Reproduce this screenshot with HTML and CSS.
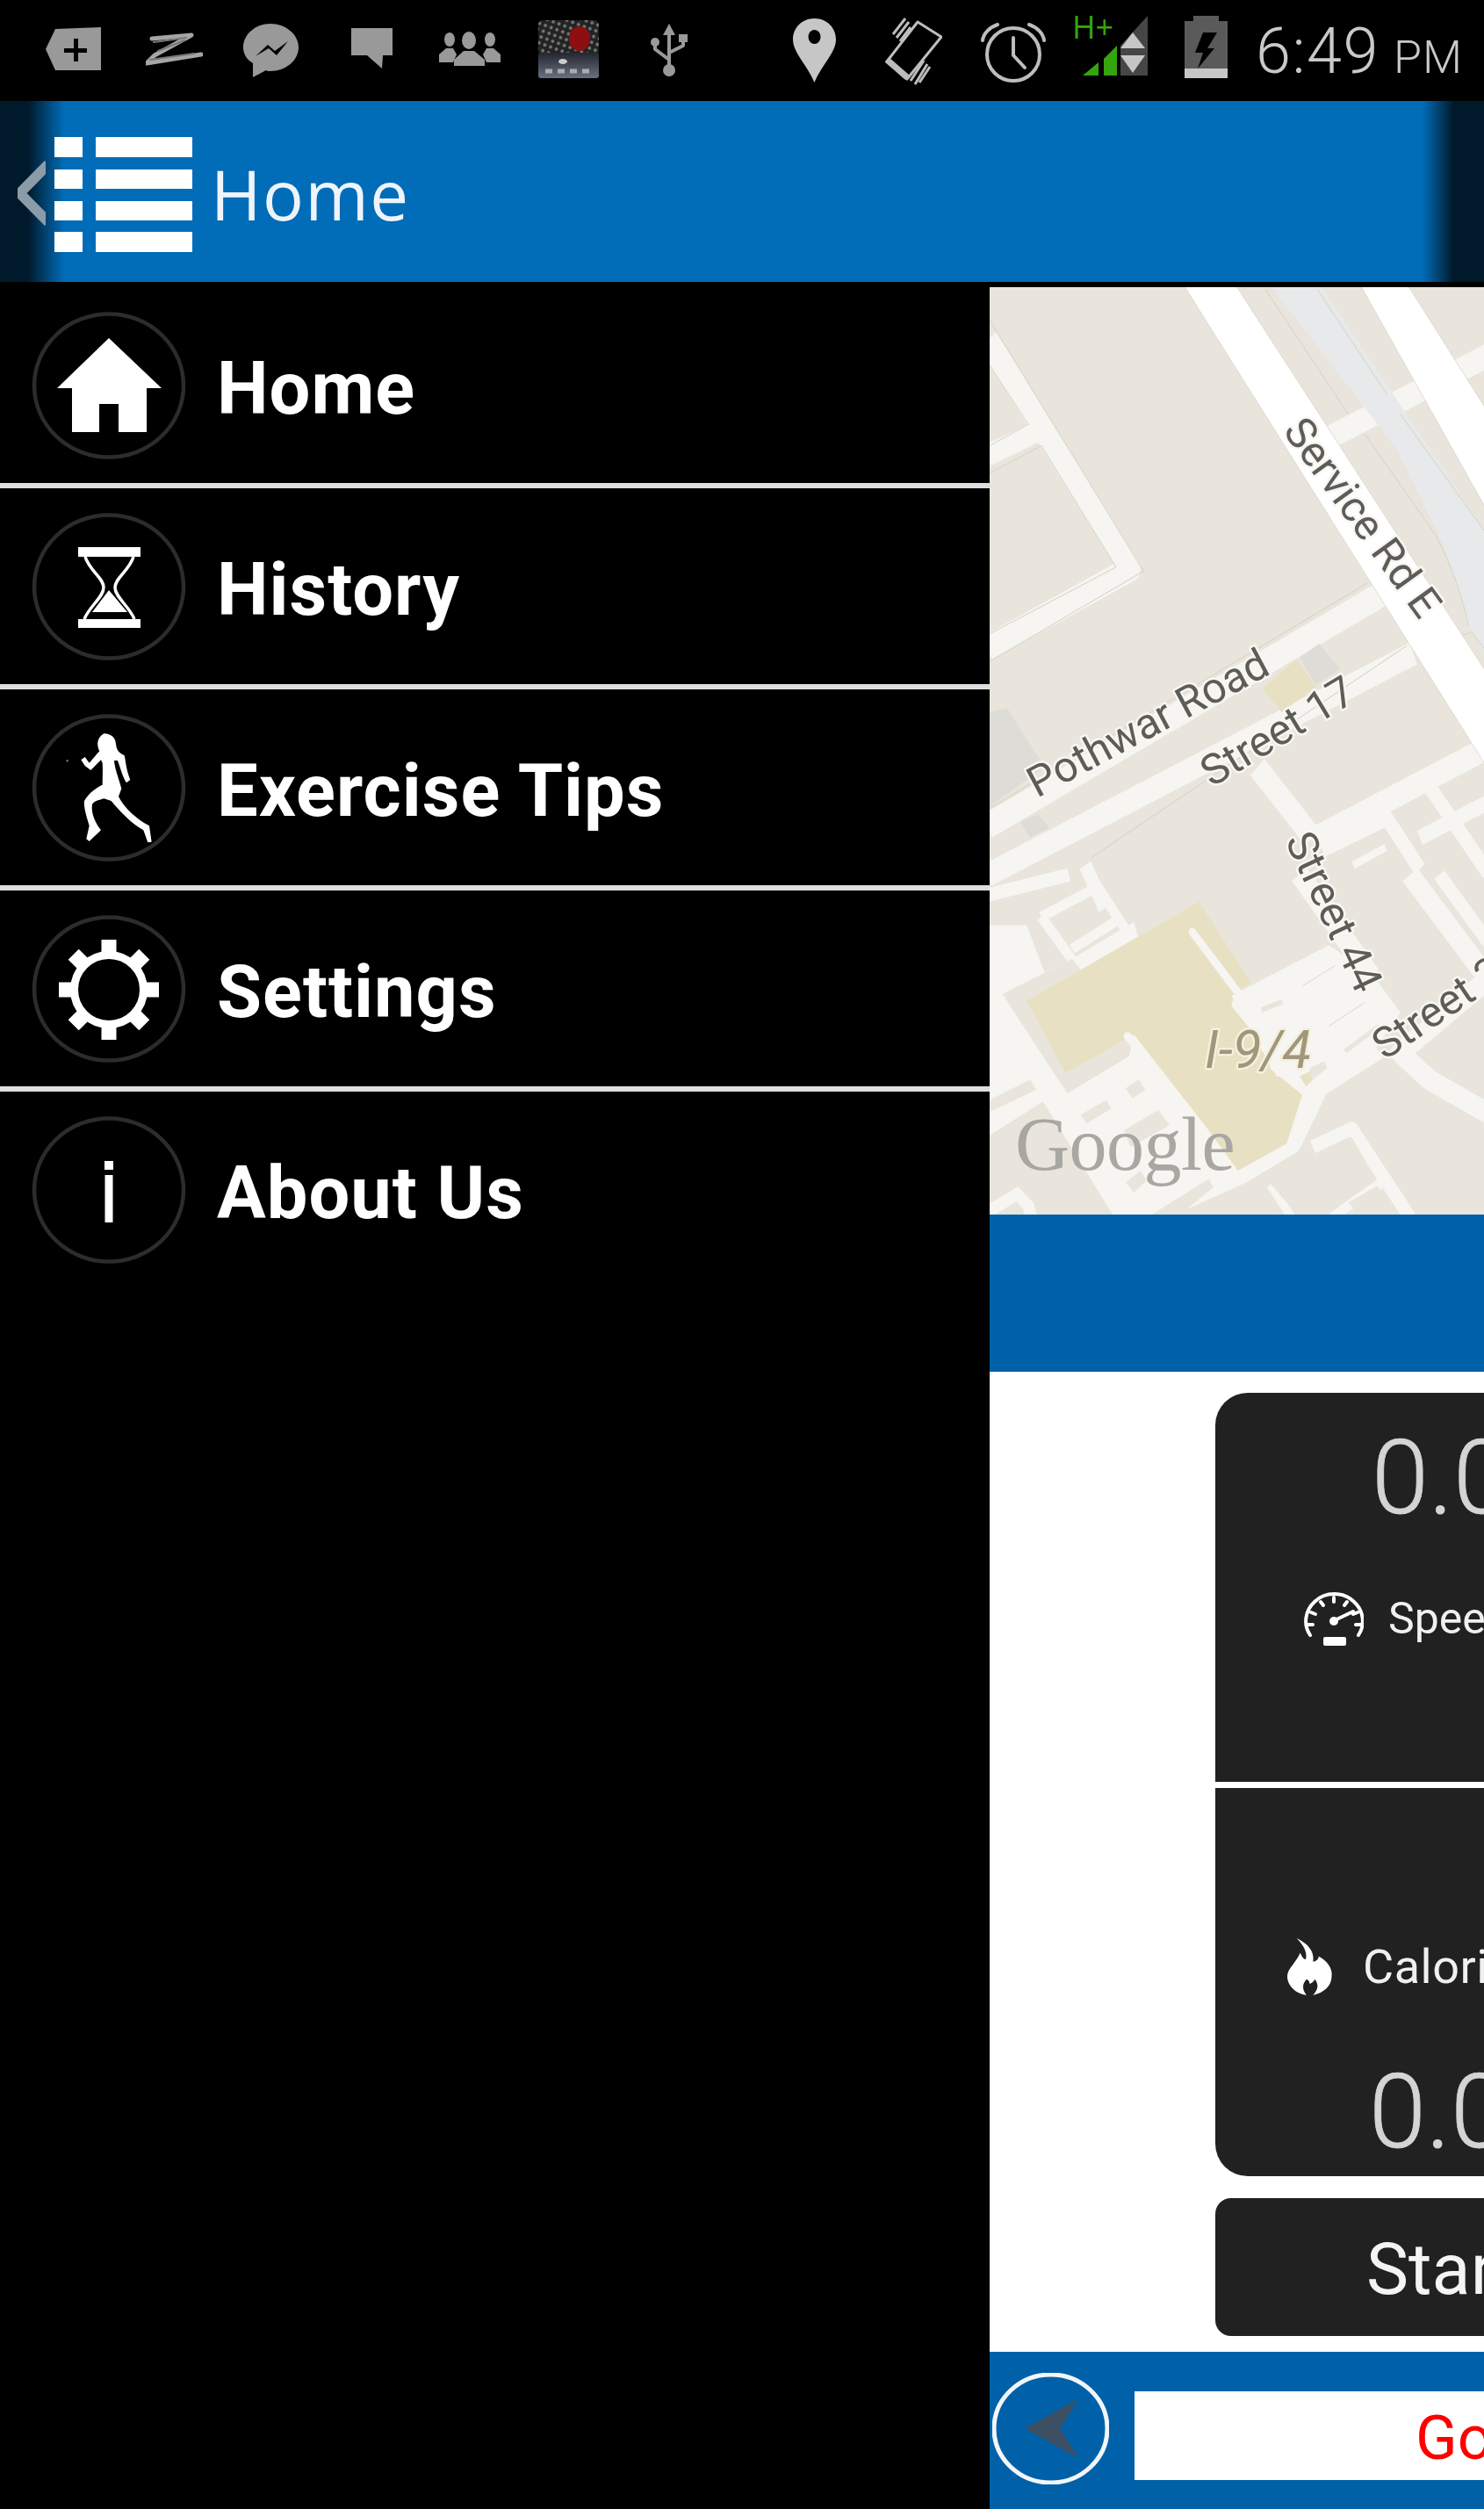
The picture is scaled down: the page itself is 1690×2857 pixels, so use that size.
FILE: index.html
```html
<!DOCTYPE html>
<html lang="en">
<head>
<meta charset="utf-8">
<title>Home</title>
<link rel="stylesheet" href="styles.css">
</head>
<body>
<div class="screen">
  <header class="status">
    <svg class="si si-plus" width="64" height="115"><polygon class="g9" points="0,56 11,33 63,31 63,80 11,80"/><rect x="21" y="55" width="26" height="5"/><rect x="32" y="44" width="5" height="26"/></svg>
    <svg class="si si-z" width="65" height="115"><path class="ln9" d="M7 44 L52 40 L10 63 L1 72 L63 62"/><path class="ln9 thin" d="M9 48 L46 43 M5 68 L55 61 M14 58 L44 46"/></svg>
    <svg class="si si-msg" width="63" height="115"><path class="g9" d="M31 27 C48 27 63 39 63 54 C63 69 48 81 31 81 C29 81 27 81 26 80 L11 88 L11 72 C4 68 0 61 0 54 C0 39 14 27 31 27Z"/><path d="M14 64 L28 51 L36 58 L51 47 L38 63 L29 55Z"/></svg>
    <svg class="si si-chat" width="47" height="115"><polygon class="g9" points="0,32 47,32 47,63 36,63 35,78 18,63 0,63"/></svg>
    <svg class="si si-people" width="70" height="115"><g class="g9"><ellipse cx="12" cy="45" rx="6" ry="8"/><ellipse cx="58" cy="45" rx="6" ry="8"/><path d="M0 71 L0 62 L8 55 L16 55 L20 62 L16 71Z"/><path d="M70 71 L70 62 L62 55 L54 55 L50 62 L54 71Z"/><ellipse cx="34" cy="46" rx="8" ry="10"/><path d="M17 75 L17 68 L28 58 L40 58 L52 68 L52 75Z"/></g></svg>
    <svg class="si si-thumb" width="69" height="115">
      <defs>
        <pattern id="dots" width="7" height="7" patternUnits="userSpaceOnUse" patternTransform="rotate(20)"><rect width="7" height="7" fill="#222"/><circle cx="3.5" cy="3.5" r="1.9" fill="#777"/></pattern>
        <linearGradient id="thumbLow" x1="0" y1="0" x2="0" y2="1"><stop offset="0" stop-color="#23262f"/><stop offset="1" stop-color="#6a7080"/></linearGradient>
      </defs>
      <rect y="23" width="69" height="40" rx="5" fill="url(#dots)"/>
      <rect y="60" width="69" height="29" rx="3" fill="url(#thumbLow)"/>
      <ellipse cx="47" cy="44" rx="12" ry="14" fill="#8e0f12"/>
      <ellipse cx="28" cy="70" rx="5" ry="3" fill="#ccc"/>
      <path class="dash" d="M8 81 H60"/>
    </svg>
    <svg class="si si-usb" width="43" height="115"><g class="ln9 w4"><path d="M21 34 V74"/><path d="M21 68 L5 56 V49"/><path d="M21 60 L37 52 V46"/></g><g class="g9"><polygon points="21,27 14,40 28,40"/><circle cx="21" cy="80" r="7"/><circle cx="5" cy="48" r="5"/><rect x="32" y="39" width="10" height="9"/></g></svg>
    <svg class="si si-pin" width="49" height="115"><path class="gc" d="M24.5 21 C10 21 0 32 0 45 C0 60 17 75 24.5 94 C32 75 49 60 49 45 C49 32 39 21 24.5 21Z"/><ellipse cx="24.5" cy="42" rx="7" ry="8"/></svg>
    <svg class="si si-phone" width="65" height="115"><g class="lnc"><path d="M37 25 L64 42 L25 90 L2 70Z"/><path class="thick" d="M2 68 L25 88"/><path d="M9 39 L23 21 M13 43 L27 25 M17 47 L29 31 M34 96 L48 73 M39 94 L51 76 M29 92 L44 69"/></g></svg>
    <svg class="si si-alarm" width="74" height="115"><g class="lnc w4"><circle cx="37" cy="62" r="30"/><path d="M37 43 V63 L50 77"/><path d="M2 46 C3 38 10 31 19 28"/><path d="M72 46 C71 38 64 31 55 28"/></g></svg>
    <svg class="si si-signal" width="86" height="115"><text class="hplus" x="-1" y="44">H+</text><polygon class="grn" points="11,86 29,71 29,86"/><polygon class="grn" points="35,67 50,52 50,86 35,86"/><polygon class="g4" points="54,52 85,18 85,86 54,86"/><polygon class="gc" points="68,37 82,55 54,55"/><polygon class="gc" points="54,63 82,63 68,83"/></svg>
    <svg class="si si-batt" width="49" height="115"><rect class="g5" x="10" y="18" width="29" height="8"/><rect class="g5" y="24" width="49" height="54"/><rect class="gc" y="78" width="49" height="11"/><polygon points="21,37 37,37 26,55 34,55 15,78 21,60 12,60"/></svg>
    <div class="clock"><span class="clock-t">6:49</span><span class="clock-pm">PM</span></div>
  </header>

  <div class="appbar">
    <svg class="chev" width="32" height="206"><polyline points="48,73 6,105 48,137" transform="translate(-2 0) scale(.75 1)"/></svg>
    <svg class="menu" width="157" height="131" viewBox="0 0 157 131">
      <rect width="32" height="23"/><rect x="47" width="110" height="23"/>
      <rect y="37" width="32" height="22"/><rect x="47" y="37" width="110" height="22"/>
      <rect y="73" width="32" height="22"/><rect x="47" y="73" width="110" height="22"/>
      <rect y="108" width="32" height="23"/><rect x="47" y="108" width="110" height="23"/>
    </svg>
    <div class="apptitle">Home</div>
  </div>

  <div class="content">
    <nav class="drawer">
      <div class="row">
        <svg class="ic" width="180" height="180"><ellipse class="ring" cx="90" cy="90" rx="85" ry="81.5"/><path class="wh" fill-rule="evenodd" d="M90 36 L150 93 H133 V143 H101 V111 H79 V143 H48 V93 H31Z"/></svg>
        <span class="lbl">Home</span>
      </div>
      <div class="row">
        <svg class="ic" width="180" height="180"><ellipse class="ring" cx="90" cy="90" rx="85" ry="81.5"/><rect class="wh" x="55" y="45" width="71" height="11"/><rect class="wh" x="55" y="127" width="71" height="10"/><path class="wln" d="M63 56 C68 72 84 80 84 91 C84 102 68 112 62 127 M118 56 C113 72 97 80 97 91 C97 102 113 112 119 127"/><polygon class="wh" points="90,94 111,119 71,119"/></svg>
        <span class="lbl">History</span>
      </div>
      <div class="row">
        <svg class="ic" width="180" height="180"><ellipse class="ring" cx="90" cy="90" rx="85" ry="81.5"/><g transform="translate(26 15) scale(.3333)"><path class="wh" d="M175 40 C200 40 215 55 216 75 C218 95 225 105 245 115 C250 135 250 160 265 198 L252 208 C240 190 232 160 222 132 L210 132 C212 160 225 190 235 228 L225 255 C245 295 290 335 330 355 L338 410 L325 412 L310 370 C285 355 255 335 200 270 L175 262 C155 268 140 272 135 282 C130 310 145 345 165 370 L125 408 L115 400 L125 355 C115 320 105 290 108 270 C125 240 150 225 170 215 C170 190 172 165 170 140 L165 130 L130 165 L110 150 L97 130 L110 120 L125 140 C140 125 150 110 160 100 C150 80 150 55 175 40Z"/><circle class="faint" cx="50" cy="133" r="4"/></g></svg>
        <span class="lbl">Exercise Tips</span>
      </div>
      <div class="row">
        <svg class="ic" width="180" height="180"><ellipse class="ring" cx="90" cy="90" rx="85" ry="81.5"/><circle class="gear" cx="90" cy="91" r="39.5"/><g class="wh"><rect x="81.5" y="34" width="17" height="20"/><rect x="81.5" y="34" width="17" height="20" transform="rotate(45 90 91)"/><rect x="81.5" y="34" width="17" height="20" transform="rotate(90 90 91)"/><rect x="81.5" y="34" width="17" height="20" transform="rotate(135 90 91)"/><rect x="81.5" y="34" width="17" height="20" transform="rotate(180 90 91)"/><rect x="81.5" y="34" width="17" height="20" transform="rotate(225 90 91)"/><rect x="81.5" y="34" width="17" height="20" transform="rotate(270 90 91)"/><rect x="81.5" y="34" width="17" height="20" transform="rotate(315 90 91)"/></g></svg>
        <span class="lbl">Settings</span>
      </div>
      <div class="row last">
        <svg class="ic" width="180" height="180"><ellipse class="ring" cx="90" cy="90" rx="85" ry="81.5"/><rect class="wh" x="85" y="57" width="10" height="10"/><rect class="wh" x="85.5" y="73" width="9" height="54"/></svg>
        <span class="lbl">About Us</span>
      </div>
    </nav>

    <main class="panel">
      <svg class="map" width="563" height="1056" viewBox="0 0 563 1056">
        <rect class="m-bg" width="563" height="1056"/>
        <g transform="translate(-17 -7) scale(.37 .4464)">
          <g class="m-road">
            <path class="w65" d="M40 150 L478 735 L40 935"/>
            <path class="w55" d="M40 445 L200 380"/>
            <path class="w65" d="M40 1390 L1250 800"/>
            <path class="w60" d="M40 1515 L1350 950"/>
            <path class="w60" d="M870 1240 L1040 1420"/>
            <path class="w60" d="M1050 1420 L1580 1190"/>
            <path class="w60" d="M1090 400 L1580 190"/>
            <path class="w40" d="M340 1490 L400 1600"/>
            <path class="w40" d="M1070 1450 L1270 1370"/>
            <path class="w40" d="M1260 1360 L1370 1500"/>
            <path class="w40" d="M1400 1290 L1580 1510"/>
            <path class="w40" d="M1370 1420 L1580 1330"/>
            <path class="w20" d="M1165 1490 L1265 1445"/>
          </g>
          <path class="m-edge" d="M46 100 L520 740 L46 970 M46 215 L165 365 L46 420 M46 490 L205 420 L435 730 L46 900 M1210 770 L46 1345 M1330 930 L360 1470"/>
          <polygon class="m-bld" points="46,1100 100,1090 215,1240 46,1340"/>
          <polygon class="m-bld" points="140,1380 195,1360 230,1395 170,1420"/>
          <polygon class="m-hw" points="900,0 1055,0 1580,650 1580,960 1520,880 1490,780 1430,650 1300,430"/>
          <path class="m-edge" d="M895 22 L1150 340 M1055 22 L1270 290 M1200 390 L1420 650 C1470 730 1500 800 1520 880 M1310 340 L1580 650 M1500 905 L1530 895 L1580 950"/>
          <polygon class="m-white" points="635,0 795,0 1580,1005 1580,1245"/>
          <polygon class="m-white" points="1180,0 1325,0 1580,335 1580,590"/>
          <polygon class="m-bld" points="1000,960 1060,925 1125,990 1050,1030"/>
          <polygon class="m-tan" points="885,1040 990,965 1050,1035 945,1100"/>
        </g>
        <g transform="translate(-17 673) scale(.37 .3827)">
          <polygon class="m-light" points="46,140 160,140 215,280 300,240 490,130 520,235 700,160 810,340 1090,200 1220,280 1310,400 1240,500 1060,620 980,800 820,880 520,1010 46,1010"/>
          <g class="m-road">
            <path class="w60" d="M1000 -10 L1220 290"/>
            <path class="w60" d="M1340 -10 L1580 300"/>
            <path class="w40" d="M1430 -10 L1580 190"/>
            <path class="w40" d="M40 50 L290 -10"/>
            <path class="w30" d="M205 115 L370 30"/>
            <path class="w30" d="M205 115 L320 270"/>
            <path class="w30" d="M300 210 L440 125"/>
            <path class="w30" d="M355 -10 L520 235"/>
            <path class="w60" d="M1240 510 L1060 620 L975 790 L820 880 L520 1010"/>
            <path class="w60" d="M1580 700 L1400 600 L1310 520 L1580 300"/>
            <path class="w40" d="M1040 800 L1160 745 L1340 1010"/>
            <path class="w30" d="M900 920 L980 1010"/>
            <path class="w30" d="M1100 1010 L1260 900"/>
          </g>
          <polygon class="m-bg" points="85,345 300,240 490,470 475,530 285,640"/>
          <polygon class="m-tan" points="160,365 690,70 850,310 800,345 790,380 1010,640 960,790 810,870 720,750 490,465 280,580"/>
          <path class="m-stw" d="M670 160 L810 340"/>
          <path class="m-stw" d="M470 470 L510 515"/>
          <path class="m-stw" d="M920 560 L1015 635"/>
          <polygon class="m-light" points="790,350 1090,200 1220,290 1300,400 1180,510 1060,600 930,590"/>
          <g class="m-bg">
            <polygon points="465,625 505,600 525,630 485,655"/>
            <polygon points="325,705 405,660 420,685 345,730"/>
            <polygon points="46,660 170,600 190,630 46,695"/>
            <polygon points="46,765 210,665 240,710 430,1010 46,1010"/>
            <polygon points="460,750 565,690 600,735 480,800"/>
            <polygon points="465,905 510,870 530,900 490,935"/>
            <polygon points="530,1010 720,895 735,920 620,1010"/>
            <polygon points="925,905 1160,770 1230,885 990,1010"/>
            <polygon points="820,965 900,920 960,1010 860,1010"/>
            <polygon points="1150,965 1240,915 1290,1010 1190,1010"/>
            <polygon points="1390,530 1470,460 1540,610"/>
            <polygon points="880,385 945,360 950,375 885,400"/>
            <polygon points="1135,510 1240,435 1250,445 1145,520"/>
          </g>
          <path class="m-stw light2" d="M46 990 L130 940 L165 975 L175 1010"/>
          <path class="m-edge" d="M1010 320 L1110 260 M1090 440 L1200 370"/>
          <polygon class="m-tan" points="1000,590 1040,570 1040,600 1020,620"/>
          <polygon class="m-bg" points="1030,565 1075,545 1085,565 1040,600"/>
        </g>
        <text class="m-lbl" transform="translate(333 164) rotate(54)">Service Rd E</text>
        <text class="m-lbl" transform="translate(54 582) rotate(-28)">Pothwar Road</text>
        <text class="m-lbl" transform="translate(253 570) rotate(-31)">Street 17</text>
        <text class="m-lbl" transform="translate(336 630) rotate(65)">Street 44</text>
        <text class="m-lbl" transform="translate(450 881) rotate(-34)">Street 3</text>
        <text class="m-area" x="245" y="889">I-9/4</text>
        <text class="m-goog" x="29" y="1005">Google</text>
      </svg>
      <div class="band"></div>
      <section class="body">
        <div class="card card-top">
          <div class="val val-a">0.00</div>
          <div class="cap cap-a">
            <svg width="68" height="62"><g class="wln2"><path d="M7 50 C-1 38 1 22 12 12 C24 0 45 0 57 12 C68 22 70 38 62 50"/><path d="M34 7 V12 M19 12 L22 16 M49 12 L46 16 M8 24 L13 26 M61 24 L56 26 M4 38 L10 38 M65 38 L59 38"/><path d="M35 33 L56 23"/></g><circle class="wh" cx="34" cy="34" r="5"/><rect class="wh" x="22" y="52" width="26" height="10" rx="2"/></svg>
            <span>Speed</span>
          </div>
        </div>
        <div class="card card-bot">
          <div class="cap cap-b">
            <svg width="53" height="65"><g transform="scale(.42 .3333)"><path class="wh" fill-rule="evenodd" d="M25 0 C50 15 75 40 70 80 C80 78 85 70 85 62 C105 75 125 100 120 135 C118 165 100 185 70 195 C85 170 85 160 75 140 C70 150 65 155 60 155 C60 145 58 145 52 140 C42 155 38 170 52 195 C25 190 0 165 0 130 C0 105 20 90 35 50 C42 68 45 72 50 72 C55 50 45 25 25 0Z"/></g></svg>
            <span>Calories</span>
          </div>
          <div class="val val-b">0.00</div>
        </div>
        <div class="card card-start">Start</div>
      </section>
      <footer class="bottom">
        <svg class="back" width="133" height="127"><ellipse class="back-ring" cx="66.5" cy="63.5" rx="64.5" ry="61.5"/><polygon class="back-arrow" points="37,63 98,30 77,63 98,97"/></svg>
        <div class="goinput">Go</div>
      </footer>
    </main>
  </div>
</div>
</body>
</html>
```

FILE: styles.css
```css
* { box-sizing: border-box; }
html, body { margin: 0; padding: 0; background: #000; }
body { width: 1690px; height: 2857px; overflow: hidden; font-family: Roboto, "Liberation Sans", sans-serif; }
svg { display: block; flex: none; }
.screen { display: flex; flex-direction: column; width: 1690px; height: 2857px; background: #000; }

/* status bar */
.status { display: flex; align-items: flex-start; height: 115px; flex: none; background: #000; }
.si-plus { margin-left: 52px; }
.si-z { margin-left: 50px; }
.si-msg { margin-left: 46px; }
.si-chat { margin-left: 60px; }
.si-people { margin-left: 53px; }
.si-thumb { margin-left: 43px; }
.si-usb { margin-left: 59px; }
.si-pin { margin-left: 119px; }
.si-phone { margin-left: 56px; }
.si-alarm { margin-left: 44px; }
.si-signal { margin-left: 31px; overflow: visible; }
.si-batt { margin-left: 41px; }
.g9 { fill: #999; }
.gc { fill: #c6c6c6; }
.g4 { fill: #464646; }
.g5 { fill: #5a5a5a; }
.grn { fill: #35a50d; }
.ln9 { fill: none; stroke: #a5a5a5; stroke-width: 5; stroke-linejoin: round; stroke-linecap: round; }
.ln9.thin { stroke-width: 2; stroke: #777; }
.ln9.w4 { stroke-width: 4; stroke: #999; }
.lnc { fill: none; stroke: #bdbdbd; stroke-width: 3; stroke-linejoin: round; }
.lnc .thick { stroke-width: 7; }
.lnc.w4 { stroke-width: 4; stroke-linecap: round; }
.dash { fill: none; stroke: #a8acb5; stroke-width: 5; stroke-dasharray: 8 6; }
.hplus { font-family: "Open Sans", sans-serif; font-weight: 400; font-size: 36px; fill: #35a50d; }
.clock { margin-left: 32px; padding-top: 1px; line-height: 115px; color: #c9c9c9; font-weight: 300; white-space: nowrap; display: flex; align-items: baseline; }
.clock-t { font-size: 72px; letter-spacing: 1.5px; }
.clock-pm { font-size: 52px; margin-left: 16px; letter-spacing: 1px; }

/* app bar */
.appbar { display: flex; align-items: center; height: 206px; flex: none; background: linear-gradient(to right, #001a2c 0, #001a2c 32px, #016cb8 73px, #016cb8 1620px, #001a2c 1655px, #001a2c 100%); }
.chev { margin-left: 20px; }
.chev polyline { fill: none; stroke: #8b9ba8; stroke-width: 13; }
.menu { margin-left: 10px; margin-top: 6px; }
.menu rect { fill: #fff; }
.apptitle { margin-left: 21px; margin-top: 5px; font-family: "Open Sans", sans-serif; font-weight: 400; font-size: 78px; letter-spacing: 1.5px; color: #eef4fa; }

/* content */
.content { display: flex; flex: 1; min-height: 0; margin-top: 6px; }
.drawer { width: 1127px; flex: none; background: #000; }
.row { display: flex; align-items: center; height: 229px; padding-left: 34px; border-bottom: 6px solid #dedede; }
.row.last { border-bottom: 0; height: 223px; }
.lbl { margin-left: 33px; padding-top: 8px; font-weight: 700; font-size: 83px; letter-spacing: 1px; color: #fff; white-space: nowrap; }
.ring { fill: none; stroke: #2c2c2c; stroke-width: 4.5; }
.wh { fill: #fff; }
.faint { fill: #666; }
.wln { fill: none; stroke: #fff; stroke-width: 3.5; }
.wln2 { fill: none; stroke: #fff; stroke-width: 4; stroke-linecap: round; }
.gear { fill: none; stroke: #fff; stroke-width: 9; }

/* right panel */
.panel { flex: 1; min-width: 0; display: flex; flex-direction: column; overflow: hidden; background: #fff; }
.map { flex: none; }
.m-bg { fill: #e9e5dc; }
.m-light { fill: #f6f5f2; }
.m-road path { fill: none; stroke: #f6f5f2; stroke-linejoin: round; }
.w65 { stroke-width: 65; }
.w60 { stroke-width: 60; }
.w55 { stroke-width: 55; }
.w40 { stroke-width: 40; }
.w30 { stroke-width: 30; }
.w20 { stroke-width: 20; }
.m-edge { fill: none; stroke: #d8d4c8; stroke-width: 2.5; }
.m-bld { fill: #dedcd7; }
.m-hw { fill: #e8e9eb; }
.m-white { fill: #fff; stroke: #d9d5c9; stroke-width: 2; }
.m-tan { fill: #e8e0c2; }
.m-stw { fill: none; stroke: #f6f5f2; stroke-width: 24; stroke-linecap: round; }
.m-stw.light2 { stroke-width: 36; }
.m-lbl { font-family: Roboto, sans-serif; font-size: 48.5px; fill: #5e5c56; stroke: #f7f6f2; stroke-width: 5px; paint-order: stroke; stroke-linejoin: round; }
.m-area { font-family: Roboto, sans-serif; font-style: italic; font-size: 60px; fill: #a0977c; stroke: #f5efdc; stroke-width: 5px; paint-order: stroke; stroke-linejoin: round; }
.m-goog { font-family: "Liberation Serif", serif; font-size: 86px; fill: #a9a7a2; letter-spacing: -.5px; }
.band { height: 179px; flex: none; background: #0061a8; }
.body { flex: 1; min-height: 0; padding: 24px 0 0 257px; background: #fff; }
.card { width: 700px; background: #212121; color: #fff; }
.card-top { height: 443px; border-radius: 37px 0 0 0; margin-bottom: 7px; padding-top: 37px; }
.card-bot { height: 442px; border-radius: 0 0 0 37px; padding-top: 171px; margin-bottom: 25px; }
.card-start { height: 157px; border-radius: 18px 0 0 18px; padding-left: 172px; font-size: 81px; line-height: 163px; color: #f4f4f4; }
.val { font-size: 117px; line-height: 120px; font-weight: 300; color: #d4d4d4; white-space: nowrap; -webkit-text-stroke: .8px #d4d4d4; }
.val-a { padding-left: 178px; }
.val-b { padding-left: 175px; margin-top: 73px; }
.cap { display: flex; align-items: center; font-size: 50px; color: #f0f0f0; white-space: nowrap; }
.cap-a { padding-left: 101px; margin-top: 69px; gap: 28px; }
.cap-b { padding-left: 82px; gap: 33px; font-size: 54px; letter-spacing: .5px; }
.bottom { display: flex; align-items: flex-start; height: 179px; flex: none; background: #0061a8; padding-top: 24px; }
.back { margin-left: 3px; }
.back-ring { fill: none; stroke: #f2f6fa; stroke-width: 5; }
.back-arrow { fill: #3c4f63; }
.goinput { margin-left: 29px; margin-top: 21px; width: 500px; height: 101px; background: #fff; padding-left: 320px; font-size: 70px; line-height: 106px; color: #f00; white-space: nowrap; }
```
